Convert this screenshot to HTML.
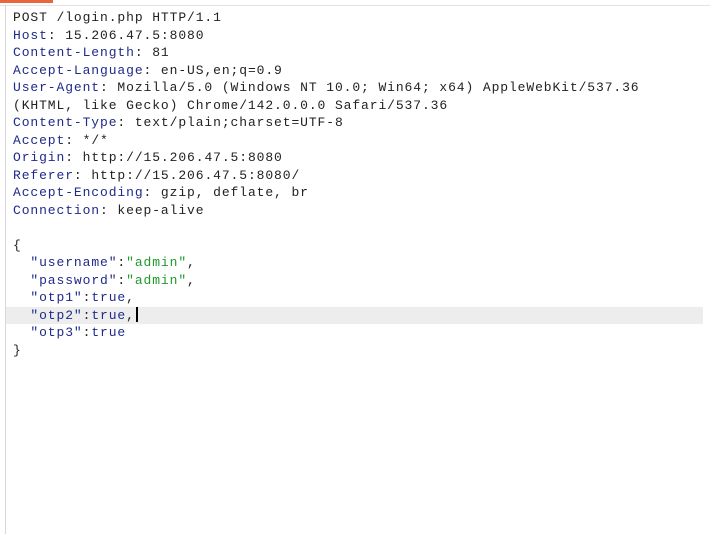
<!DOCTYPE html>
<html><head><style>
body{margin:0;width:710px;height:534px;background:#fff;overflow:hidden;position:relative;font-family:"Liberation Mono",monospace;}
.tab{position:absolute;left:0;top:0;width:53px;height:3px;background:#e8663d;}
.top{position:absolute;left:0;top:5px;width:710px;height:1px;background:#e2e2e2;}
.left{position:absolute;left:5px;top:5px;width:1px;height:529px;background:#d8d8d8;}
.hl{position:absolute;left:6px;top:307px;width:697px;height:17px;background:#ededed;}
.code{position:absolute;left:13px;top:9px;font-size:13px;letter-spacing:0.9px;line-height:17.5px;color:#222;white-space:pre;}
.k{color:#1f2a8a}
.g{color:#1e9a2a}
.cur{display:inline-block;width:2px;height:15px;background:#000;vertical-align:-3px;margin-left:1px}
</style></head><body>
<div class="tab"></div><div class="top"></div><div class="left"></div><div class="hl"></div>
<div class="code">POST /login.php HTTP/1.1
<span class="k">Host</span>: 15.206.47.5:8080
<span class="k">Content-Length</span>: 81
<span class="k">Accept-Language</span>: en-US,en;q=0.9
<span class="k">User-Agent</span>: Mozilla/5.0 (Windows NT 10.0; Win64; x64) AppleWebKit/537.36
(KHTML, like Gecko) Chrome/142.0.0.0 Safari/537.36
<span class="k">Content-Type</span>: text/plain;charset=UTF-8
<span class="k">Accept</span>: */*
<span class="k">Origin</span>: http://15.206.47.5:8080
<span class="k">Referer</span>: http://15.206.47.5:8080/
<span class="k">Accept-Encoding</span>: gzip, deflate, br
<span class="k">Connection</span>: keep-alive

{
  <span class="k">"username"</span>:<span class="g">"admin"</span>,
  <span class="k">"password"</span>:<span class="g">"admin"</span>,
  <span class="k">"otp1"</span>:<span class="k">true</span>,
  <span class="k">"otp2"</span>:<span class="k">true</span>,<span class="cur"></span>
  <span class="k">"otp3"</span>:<span class="k">true</span>
}</div>
</body></html>
